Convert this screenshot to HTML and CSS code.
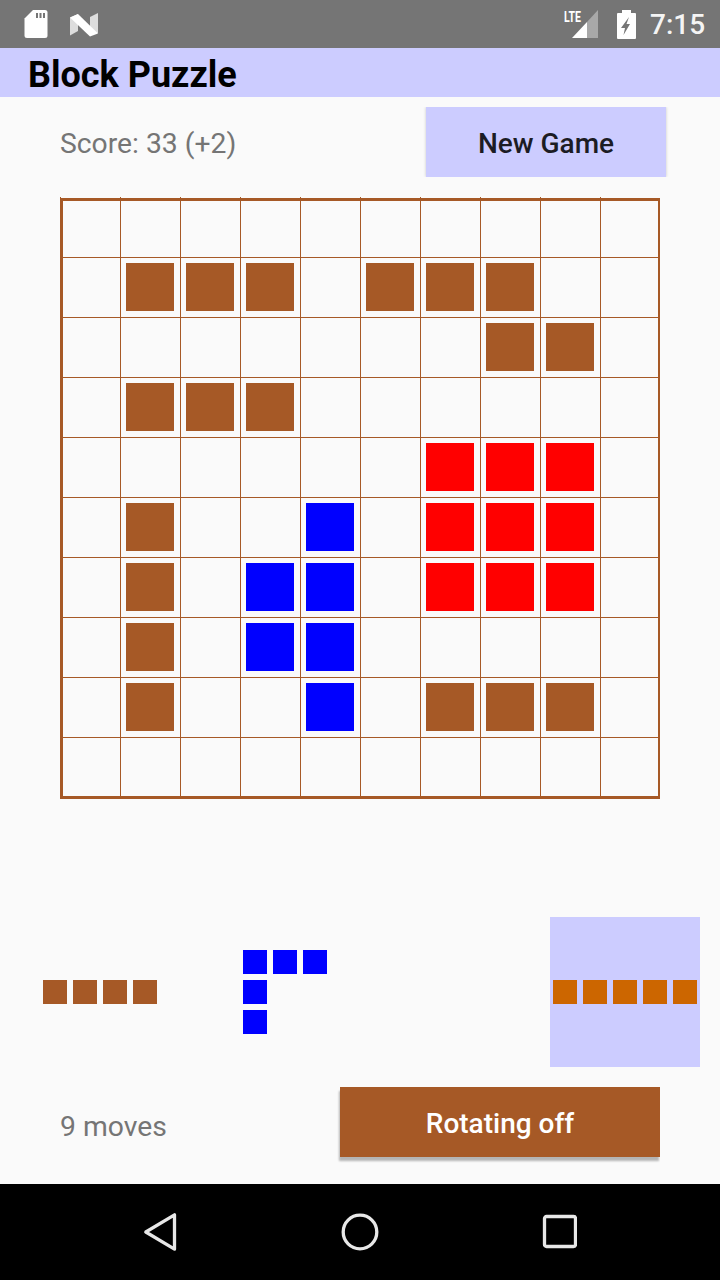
FILE: index.html
```html
<!doctype html>
<html lang="en">
<head>
	<meta charset="utf-8">
	<title>Block Puzzle</title>
	<link rel="stylesheet" href="styles.css">
</head>
<body>
	<div class="statusbar">
		<svg class="sd" width="24" height="28" viewBox="0 0 24 28">
			<path fill="#fff" d="M9 0H21Q23.500 0 23.500 2.500V25.500Q23.500 28 21 28H3Q.5 28 .5 25.500V8.500Z"/>
			<path fill="#757575" d="M12 3h2v5h-2zM15.500 3h2v5h-2zM19 3h2v5h-2z"/>
		</svg>
		<svg class="nlogo" width="30" height="26" viewBox="0 0 30 26">
			<path fill="#ddd" d="M1 5.500L9 2V19L1 23.500Z"/>
			<path fill="#ddd" d="M21 5L29 1V21H21Z"/>
			<path fill="#fff" d="M1 5.500L9 2L29 21.500L21 24.500Z"/>
		</svg>
		<div class="status-right">
			<div class="signal">
				<span class="lte">LTE</span>
				<svg width="26" height="28" viewBox="0 0 26 28">
					<path fill="#a8a8a8" d="M26 0V28H15V12Z"/>
					<path fill="#fff" d="M0 28L15 12V28Z"/>
				</svg>
			</div>
			<svg class="battery" width="19" height="29" viewBox="0 0 19 29">
				<path fill="#fff" fill-rule="evenodd" d="M5 0H14V3H18Q19 3 19 4V28Q19 29 18 29H1Q0 29 0 28V4Q0 3 1 3H5ZM12 7L4 18H8L6.500 25L13 14H9.500Z"/>
			</svg>
			<span class="clock">7:15</span>
		</div>
	</div>

	<div class="appbar">Block Puzzle</div>

	<div class="main">
		<div class="toprow">
			<span class="label score">Score: 33 (+2)</span>
			<button class="btn btn-new">New Game</button>
		</div>

		<div class="board">
			<div class="cell"></div><div class="cell"></div><div class="cell"></div><div class="cell"></div><div class="cell"></div><div class="cell"></div><div class="cell"></div><div class="cell"></div><div class="cell"></div><div class="cell"></div>
			<div class="cell"></div><div class="cell brown"></div><div class="cell brown"></div><div class="cell brown"></div><div class="cell"></div><div class="cell brown"></div><div class="cell brown"></div><div class="cell brown"></div><div class="cell"></div><div class="cell"></div>
			<div class="cell"></div><div class="cell"></div><div class="cell"></div><div class="cell"></div><div class="cell"></div><div class="cell"></div><div class="cell"></div><div class="cell brown"></div><div class="cell brown"></div><div class="cell"></div>
			<div class="cell"></div><div class="cell brown"></div><div class="cell brown"></div><div class="cell brown"></div><div class="cell"></div><div class="cell"></div><div class="cell"></div><div class="cell"></div><div class="cell"></div><div class="cell"></div>
			<div class="cell"></div><div class="cell"></div><div class="cell"></div><div class="cell"></div><div class="cell"></div><div class="cell"></div><div class="cell red"></div><div class="cell red"></div><div class="cell red"></div><div class="cell"></div>
			<div class="cell"></div><div class="cell brown"></div><div class="cell"></div><div class="cell"></div><div class="cell blue"></div><div class="cell"></div><div class="cell red"></div><div class="cell red"></div><div class="cell red"></div><div class="cell"></div>
			<div class="cell"></div><div class="cell brown"></div><div class="cell"></div><div class="cell blue"></div><div class="cell blue"></div><div class="cell"></div><div class="cell red"></div><div class="cell red"></div><div class="cell red"></div><div class="cell"></div>
			<div class="cell"></div><div class="cell brown"></div><div class="cell"></div><div class="cell blue"></div><div class="cell blue"></div><div class="cell"></div><div class="cell"></div><div class="cell"></div><div class="cell"></div><div class="cell"></div>
			<div class="cell"></div><div class="cell brown"></div><div class="cell"></div><div class="cell"></div><div class="cell blue"></div><div class="cell"></div><div class="cell brown"></div><div class="cell brown"></div><div class="cell brown"></div><div class="cell"></div>
			<div class="cell"></div><div class="cell"></div><div class="cell"></div><div class="cell"></div><div class="cell"></div><div class="cell"></div><div class="cell"></div><div class="cell"></div><div class="cell"></div><div class="cell"></div>
		</div>

		<div class="pieces">
			<div class="piece">
				<div class="shape cols-4">
					<div class="bit brown"></div><div class="bit brown"></div><div class="bit brown"></div><div class="bit brown"></div>
				</div>
			</div>
			<div class="piece">
				<div class="shape cols-3">
					<div class="bit blue"></div><div class="bit blue"></div><div class="bit blue"></div>
					<div class="bit blue"></div><div class="bit"></div><div class="bit"></div>
					<div class="bit blue"></div><div class="bit"></div><div class="bit"></div>
				</div>
			</div>
			<div class="piece selected">
				<div class="shape cols-5">
					<div class="bit orange"></div><div class="bit orange"></div><div class="bit orange"></div><div class="bit orange"></div><div class="bit orange"></div>
				</div>
			</div>
		</div>

		<div class="bottomrow">
			<span class="label moves">9 moves</span>
			<button class="btn btn-rotate">Rotating off</button>
		</div>
	</div>

	<div class="navbar">
		<svg width="36" height="40" viewBox="0 0 36 40">
			<path fill="none" stroke="#e8e8e8" stroke-width="3.300" stroke-linejoin="round" d="M2.800 20L31.500 2.800V37.200Z"/>
		</svg>
		<svg width="40" height="40" viewBox="0 0 40 40">
			<circle cx="20" cy="20" r="16.800" fill="none" stroke="#e8e8e8" stroke-width="3.300"/>
		</svg>
		<svg width="36" height="36" viewBox="0 0 36 36">
			<rect x="3.500" y="2.500" width="31" height="30" rx="2" fill="none" stroke="#e8e8e8" stroke-width="3.300"/>
		</svg>
	</div>
</body>
</html>
```

FILE: styles.css
```css
* {
	box-sizing: border-box;
}

body {
	margin: 0;
	width: 720px;
	height: 1280px;
	display: flex;
	flex-direction: column;
	background: #fafafa;
	font-family: Roboto, sans-serif;
	overflow: hidden;
}

.statusbar {
	height: 48px;
	background: #757575;
	display: flex;
	align-items: center;
	padding-left: 24px;
}
.nlogo {
	margin: 2px 0 0 21px;
}
.status-right {
	margin-left: auto;
	display: flex;
	align-items: center;
	padding-right: 16px;
}
.signal {
	position: relative;
	width: 26px;
	height: 28px;
}
.lte {
	position: absolute;
	left: -8px;
	top: -1px;
	font-size: 15.500px;
	line-height: 16px;
	font-weight: 700;
	color: #fff;
	transform: scaleX(0.68);
	transform-origin: left;
}
.battery {
	margin-left: 19px;
}
.clock {
	margin-left: 14px;
	font-size: 28px;
	font-weight: 500;
	color: #f4f4f4;
	width: 54px;
	white-space: nowrap;
}

.appbar {
	height: 49px;
	background: #ccccff;
	padding-left: 28px;
	font-size: 36px;
	font-weight: 700;
	line-height: 54px;
	color: #000;
}

.main {
	flex: 1;
	display: flex;
	flex-direction: column;
}

.toprow {
	display: flex;
	align-items: center;
	padding: 10px 54px 0 60px;
	justify-content: space-between;
}
.label {
	font-size: 28.300px;
	color: #757575;
}
.score {
	padding-top: 2px;
}
.moves {
	padding-top: 8px;
}
.btn {
	border: 0;
	height: 70px;
	padding: 0;
	font-family: Roboto, sans-serif;
	font-size: 28px;
	font-weight: 500;
}
.btn-new {
	width: 240px;
	padding-top: 3px;
	background: #ccccff;
	color: #1c1c24;
	box-shadow: 0 0 3px rgba(0,0,0,0.2);
	clip-path: inset(0 -4px);
}
.btn-rotate {
	width: 320px;
	padding-top: 3px;
	background: #a65926;
	color: #fff;
	box-shadow: -1px 4px 2px rgba(0,0,0,0.28);
	clip-path: inset(0 0 -6px -3px);
}

.board {
	position: relative;
	margin: 20px 0 0 60px;
	width: 600px;
	height: 602px;
	display: grid;
	grid-template-columns: repeat(10, 60px);
	grid-auto-rows: 60px;
}
.board::after {
	content: "";
	position: absolute;
	top: 1px;
	left: 0;
	right: 0;
	bottom: 0;
	border: 3px solid #a65926;
	border-right-width: 2px;
}
.cell {
	border-left: 1px solid #a65926;
	padding: 5px;
}
.cell:nth-child(n+11) {
	border-top: 1px solid #a65926;
}
.cell::after {
	content: "";
	display: block;
	width: 48px;
	height: 48px;
}
.cell.brown::after {
	background: #a65926;
}
.cell.red::after {
	background: #ff0000;
}
.cell.blue::after {
	background: #0000ff;
}

.pieces {
	margin-top: 118px;
	padding: 0 20px 0 25px;
	display: flex;
	gap: 35px;
}
.piece {
	width: 150px;
	height: 150px;
	display: flex;
	align-items: center;
	justify-content: center;
}
.piece.selected {
	margin-left: auto;
	background: #ccccff;
}
.shape {
	display: grid;
	grid-auto-rows: 30px;
}
.cols-3 {
	grid-template-columns: repeat(3, 30px);
}
.cols-4 {
	grid-template-columns: repeat(4, 30px);
}
.cols-5 {
	grid-template-columns: repeat(5, 30px);
}
.bit {
	margin: 3px;
}
.bit.brown {
	background: #a65926;
}
.bit.blue {
	background: #0000ff;
}
.bit.orange {
	background: #cc6600;
}

.bottomrow {
	margin-top: 20px;
	padding: 0 60px;
	display: flex;
	align-items: center;
	justify-content: space-between;
}

.navbar {
	margin-top: auto;
	height: 96px;
	background: #000;
	display: flex;
	align-items: center;
	padding: 0 143px;
	justify-content: space-between;
}
```
